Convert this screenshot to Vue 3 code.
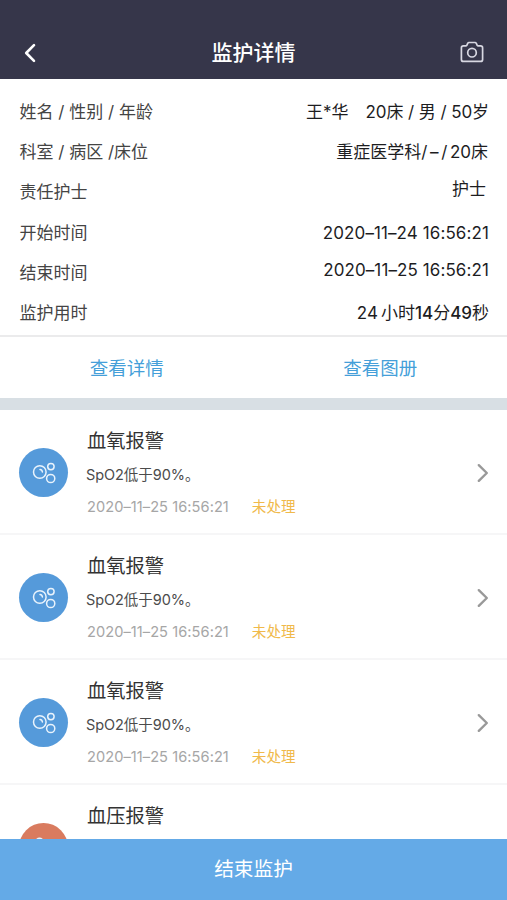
<script setup>
const info = [
  { label: '姓名 / 性别 / 年龄', kind: 'person' },
  { label: '科室 / 病区 /床位', kind: 'dept' },
  { label: '责任护士', value: '护士', kind: 'nurse' },
  { label: '开始时间', value: '2020–11–24 16:56:21', kind: 'time' },
  { label: '结束时间', value: '2020–11–25 16:56:21', kind: 'time raised' },
  { label: '监护用时', kind: 'duration' },
]
const detail = { message: 'SpO2低于90%。', time: '2020–11–25 16:56:21', status: '未处理' }
const alarms = [
  { title: '血氧报警', type: 'oxygen', detail },
  { title: '血氧报警', type: 'oxygen', detail },
  { title: '血氧报警', type: 'oxygen', detail },
  { title: '血压报警', type: 'pressure' },
]
</script>

<template>
  <div class="screen">
    <header class="header">
      <svg class="back" viewBox="0 0 14 20"><path d="M11 2.2 3.200 10l7.800 7.800" /></svg>
      <h1>监护详情</h1>
      <svg class="camera" viewBox="0 0 24 22">
        <path d="M3.400 4.900h2.400c.5 0 .8-.2 1-.6l.9-1.900c.3-.6.7-.9 1.300-.9h6c.6 0 1 .3 1.300.9l.9 1.900c.2.4.5.600 1 .600h2.400c1.200 0 2 .8 2 2v11.500c0 1.200-.8 2-2 2H3.400c-1.200 0-2-.8-2-2V6.900c0-1.200.8-2 2-2Z" />
        <circle cx="12" cy="11.700" r="4.300" />
      </svg>
    </header>

    <section class="info">
      <div v-for="row in info" :key="row.label" class="row">
        <span class="label">{{ row.label }}</span>
        <span v-if="row.kind === 'person'" class="value person"><span class="name">王*华</span><span class="bed">20床 / 男 / 50岁</span></span>
        <span v-else-if="row.kind === 'dept'" class="value dept">重症医学科<span class="separator">/–/</span>20床</span>
        <span v-else-if="row.kind === 'duration'" class="value duration"><span class="hours">24</span>小时<b>14</b>分<b>49</b>秒</span>
        <span v-else class="value" :class="row.kind">{{ row.value }}</span>
      </div>
    </section>

    <nav class="links">
      <a>查看详情</a>
      <a>查看图册</a>
    </nav>

    <main class="list">
      <article v-for="(item, i) in alarms" :key="i" class="alarm">
        <div class="badge" :class="item.type">
          <svg v-if="item.type === 'oxygen'" viewBox="0 0 49 49">
            <circle cx="20.800" cy="24" r="6.300" />
            <circle cx="31.900" cy="18.600" r="3.200" />
            <circle cx="31.700" cy="30.500" r="4.100" />
            <path d="M21 21.500c1.500.2 2.300 1.100 2.400 2.500" />
          </svg>
          <svg v-else viewBox="0 0 49 49">
            <circle cx="20.500" cy="18.800" r="3.600" />
          </svg>
        </div>
        <div class="body">
          <h2>{{ item.title }}</h2>
          <template v-if="item.detail">
            <p>{{ item.detail.message }}</p>
            <div class="meta"><time>{{ item.detail.time }}</time><span class="status">{{ item.detail.status }}</span></div>
          </template>
        </div>
        <svg class="chevron" viewBox="0 0 12 20"><path d="m1.800 2.200 8 7.800-8 7.800" /></svg>
      </article>
    </main>

    <button class="finish">结束监护</button>
  </div>
</template>

<style>
body {
  margin: 0;
  overflow: hidden;
}
</style>

<style scoped>
.screen {
  width: 507px;
  height: 900px;
  display: flex;
  flex-direction: column;
  overflow: hidden;
  background: #fff;
  font-family: Inter, "Noto Sans CJK SC", sans-serif;
}
svg {
  fill: none;
  stroke-linecap: round;
  stroke-linejoin: round;
}
.header {
  box-sizing: border-box;
  flex: none;
  height: 79px;
  padding: 27px 23px 0;
  display: flex;
  align-items: center;
  justify-content: space-between;
  background: #36364a;
}
.back {
  width: 14px;
  height: 20px;
  margin-right: 10px;
  stroke: #fff;
  stroke-width: 2.600;
}
.header h1 {
  margin: 0;
  font-size: 21px;
  line-height: 30px;
  font-weight: 500;
  color: #fff;
}
.camera {
  width: 24px;
  height: 22px;
  margin-bottom: 2px;
  stroke: #d8d8e2;
  stroke-width: 1.700;
}
.info {
  box-sizing: border-box;
  flex: none;
  height: 258px;
  padding: 13px 18px 0 19.500px;
  border-bottom: 2px solid #ebebec;
}
.row {
  height: 40.200px;
  display: flex;
  align-items: center;
  justify-content: space-between;
  white-space: pre;
  line-height: 24px;
}
.label {
  font-size: 17px;
  color: #444;
}
.value {
  font-size: 17px;
  color: #1d1d1f;
}
.person {
  display: flex;
  gap: 17px;
}
.bed {
  letter-spacing: -0.080px;
}
.dept {
  padding-right: 1px;
}
.separator {
  letter-spacing: 2.600px;
}
.nurse {
  padding: 0 3px 7px 0;
}
.time {
  letter-spacing: 0.100px;
}
.raised {
  padding-bottom: 6px;
}
.duration b {
  font-weight: 500;
}
.hours {
  margin-right: 3px;
}
.links {
  box-sizing: border-box;
  flex: none;
  height: 73px;
  display: grid;
  grid-template-columns: 1fr 1fr;
  align-items: center;
  justify-items: center;
  border-bottom: 12px solid #d8dfe4;
}
.links a {
  font-size: 18.500px;
  line-height: 26px;
  color: #459fd9;
}
.list {
  flex: 1;
  min-height: 0;
  overflow: hidden;
}
.alarm {
  box-sizing: border-box;
  height: 125px;
  padding: 2px 18px 0 19px;
  display: flex;
  align-items: center;
  border-bottom: 2px solid #f6f6f7;
}
.badge {
  width: 49px;
  height: 49px;
  border-radius: 50%;
}
.badge svg {
  display: block;
  stroke: #e9f3fc;
  stroke-width: 1.500;
}
.oxygen {
  background: #559ada;
}
.pressure {
  background: #d97b5f;
}
.body {
  flex: 1;
  height: 94px;
  margin-left: 19px;
}
.body h2 {
  margin: 0;
  font-size: 19.300px;
  line-height: 30px;
  font-weight: 400;
  color: #333;
}
.body p {
  margin: 6px 0 0 -1px;
  font-size: 14.500px;
  line-height: 26px;
  letter-spacing: -0.060px;
  color: #4b4b4b;
}
.meta {
  margin-top: 6px;
  display: flex;
  gap: 23px;
  font-size: 14.600px;
  line-height: 26px;
}
.meta time {
  letter-spacing: 0.060px;
  color: #a6a6a6;
}
.status {
  color: #f0b94a;
}
.chevron {
  width: 12px;
  height: 20px;
  stroke: #999;
  stroke-width: 2.400;
}
.finish {
  flex: none;
  height: 61px;
  padding: 0 0 2px;
  border: 0;
  background: #64aae7;
  color: #fff;
  font-family: inherit;
  font-size: 19.700px;
  line-height: 28px;
}
</style>
